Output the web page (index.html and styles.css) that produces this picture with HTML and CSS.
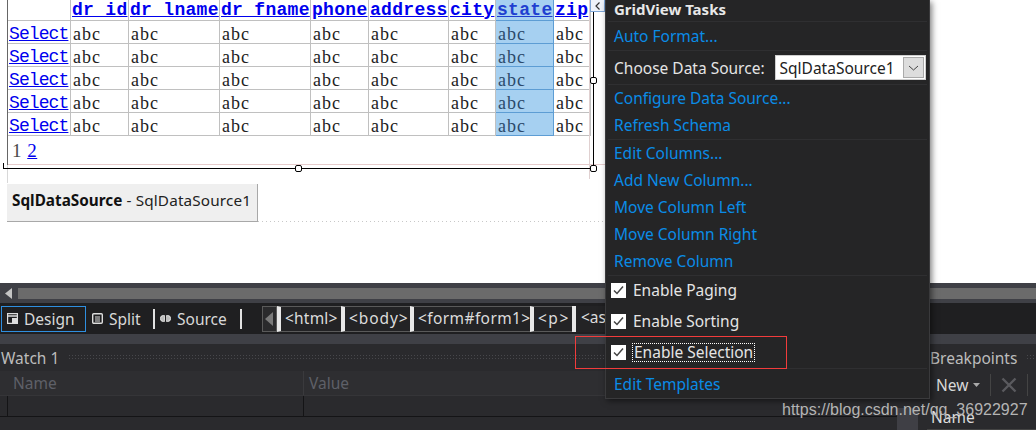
FILE: index.html
```html
<!DOCTYPE html>
<html lang="en">
<head>
<meta charset="utf-8">
<title>GridView Tasks</title>
<link rel="stylesheet" href="styles.css">
</head>
<body>
<div class="screen">
  <section class="design">
    <table class="grid">
      <colgroup>
        <col class="c0"><col class="c1"><col class="c2"><col class="c2"><col class="c3"><col class="c4"><col class="c5"><col class="c3"><col class="c6">
      </colgroup>
      <thead>
        <tr><th></th><th><a>dr_id</a></th><th><a>dr_lname</a></th><th><a>dr_fname</a></th><th><a>phone</a></th><th><a>address</a></th><th><a>city</a></th><th class="sel"><a>state</a></th><th><a>zip</a></th></tr>
      </thead>
      <tbody>
        <tr><td><a>Select</a></td><td>abc</td><td>abc</td><td>abc</td><td>abc</td><td>abc</td><td>abc</td><td class="sel">abc</td><td>abc</td></tr>
        <tr><td><a>Select</a></td><td>abc</td><td>abc</td><td>abc</td><td>abc</td><td>abc</td><td>abc</td><td class="sel">abc</td><td>abc</td></tr>
        <tr><td><a>Select</a></td><td>abc</td><td>abc</td><td>abc</td><td>abc</td><td>abc</td><td>abc</td><td class="sel">abc</td><td>abc</td></tr>
        <tr><td><a>Select</a></td><td>abc</td><td>abc</td><td>abc</td><td>abc</td><td>abc</td><td>abc</td><td class="sel">abc</td><td>abc</td></tr>
        <tr><td><a>Select</a></td><td>abc</td><td>abc</td><td>abc</td><td>abc</td><td>abc</td><td>abc</td><td class="sel">abc</td><td>abc</td></tr>
      </tbody>
    </table>
    <div class="pager">1 <a>2</a></div>
    <i class="guide guide-h"></i><i class="guide guide-e"></i><i class="guide guide-l"></i><i class="guide guide-r"></i>
    <div class="selection">
      <i class="stub"></i><i class="handle h-bottom"></i><i class="handle h-right"></i><i class="handle h-corner"></i>
    </div>
    <div class="smart-tag"><svg width="10" height="10" viewBox="0 0 10 10"><path d="M6.500 1.500 3 5l3.500 3.500" fill="none" stroke="#333" stroke-width="1.200"/></svg></div>
    <div class="datasource"><b>SqlDataSource</b> - SqlDataSource1</div>
    <div class="dots"></div>
  </section>

  <div class="hscroll">
    <svg class="arrow" width="7" height="11" viewBox="0 0 7 11"><path d="M7 0v11L0 5.500z" fill="#c4c4c4"/></svg>
    <div class="thumb"></div>
  </div>

  <nav class="viewbar">
    <div class="viewtab active"><svg width="11" height="11" viewBox="0 0 11 11"><path d="M.6.6h9.800v9.800H.6z" fill="none" stroke="#ddd" stroke-width="1.200"/><path d="M1 3h9" stroke="#ddd" stroke-width="1.500"/><path d="M5 5h6v6H5z" fill="#ddd"/></svg>Design</div>
    <div class="viewtab split"><svg width="11" height="11" viewBox="0 0 11 11"><rect x=".7" y=".7" width="9.600" height="9.600" rx="1" fill="none" stroke="#ddd" stroke-width="1.400"/><path d="M3 4h5M3 6h5M3 8h5" stroke="#ddd"/></svg>Split</div>
    <i class="sep"></i>
    <div class="viewtab source-tab"><svg width="11" height="11" viewBox="0 0 11 11"><circle cx="3.400" cy="5.500" r="3" fill="#bbb" stroke="#e4e4e4"/><circle cx="7.600" cy="5.500" r="3" fill="#bbb" stroke="#e4e4e4"/><path d="M5.500 1v9" stroke="#1f1f21"/></svg>Source</div>
    <i class="sep"></i>
    <div class="crumbs">
      <span class="crumb back"><svg width="9" height="14" viewBox="0 0 9 14"><path d="M8 0v14L0 7z" fill="#7a7a7a"/></svg></span>
      <span class="crumb c-html">&lt;html&gt;</span>
      <span class="crumb c-body">&lt;body&gt;</span>
      <span class="crumb c-form">&lt;form#form1&gt;</span>
      <span class="crumb c-p">&lt;p&gt;</span>
      <span class="crumb last">&lt;asp:GridView#GridView1&gt;</span>
    </div>
  </nav>

  <div class="band"></div>

  <section class="tools">
    <div class="watch">
      <header class="pane-title"><span>Watch 1</span><i class="grip"></i></header>
      <div class="cols"><span class="col-name">Name</span><span class="col-value">Value</span></div>
      <div class="row"><span class="row-a"></span><span class="row-b"></span></div>
    </div>
    <div class="scroll-side"></div>
    <div class="breakpoints">
      <header class="pane-title"><span>Breakpoints</span><i class="grip"></i></header>
      <div class="bp-tools"><span class="new">New<svg width="7" height="4" viewBox="0 0 7 4"><path d="M0 0h7L3.500 4z" fill="#aaa"/></svg></span><i class="tool-sep"></i><svg width="16" height="16" viewBox="0 0 16 16"><path d="M1.500 1.500l13 13M14.500 1.500l-13 13" stroke="#5a5a5e" stroke-width="2.400"/></svg><i class="tool-sep"></i></div>
      <div class="bp-head">Name</div>
    </div>
  </section>

  <aside class="tasks">
    <h2>GridView Tasks</h2>
    <div class="group one"><a>Auto Format...</a></div>
    <div class="group source">
      <label>Choose Data Source:</label>
      <div class="combo"><span>SqlDataSource1</span><b><svg width="11" height="6" viewBox="0 0 11 6"><path d="M1 1l4.500 4L10 1" fill="none" stroke="#444"/></svg></b></div>
    </div>
    <div class="group two"><a>Configure Data Source...</a><a>Refresh Schema</a></div>
    <div class="group five">
      <a>Edit Columns...</a><a>Add New Column...</a><a>Move Column Left</a><a>Move Column Right</a><a>Remove Column</a>
    </div>
    <div class="group checks">
      <div class="check"><svg width="15" height="15" viewBox="0 0 15 15"><rect width="15" height="15" fill="#fff"/><path d="M3 7.500l3 3 6-7" fill="none" stroke="#444" stroke-width="1.500"/></svg><span>Enable Paging</span></div>
      <div class="check"><svg width="15" height="15" viewBox="0 0 15 15"><rect width="15" height="15" fill="#fff"/><path d="M3 7.500l3 3 6-7" fill="none" stroke="#444" stroke-width="1.500"/></svg><span>Enable Sorting</span></div>
      <div class="check"><svg width="15" height="15" viewBox="0 0 15 15"><rect width="15" height="15" fill="#fff"/><path d="M3 7.500l3 3 6-7" fill="none" stroke="#444" stroke-width="1.500"/></svg><span class="focus">Enable Selection</span></div>
    </div>
    <div class="group last"><a>Edit Templates</a></div>
  </aside>

  <div class="redbox"></div>
  <div class="watermark">https://blog.csdn.net/qq_36922927</div>
</div>
</body>
</html>
```
FILE: styles.css
```css
* { box-sizing: border-box; }
html, body { margin: 0; padding: 0; }
body { width: 1036px; height: 430px; overflow: hidden; background: #fff; }
.screen { position: relative; width: 1036px; height: 430px; overflow: hidden; font-family: "Noto Sans", "Open Sans", sans-serif; font-size: 15.500px; display: flex; flex-direction: column; }

/* design surface */
.design { position: relative; height: 283px; background: #fff; padding: 0 0 0 7px; flex: none; }
.grid { border-collapse: collapse; table-layout: fixed; width: 583px; font-family: "Liberation Serif", "DejaVu Serif", serif; font-size: 18px; letter-spacing: 1px; color: #222; }
.c0 { width: 63px; } .c1 { width: 58px; } .c2 { width: 91px; } .c3 { width: 58px; } .c4 { width: 80px; } .c5 { width: 47px; } .c6 { width: 37px; }
.grid th, .grid td { border: 1px solid #c0c0c0; padding: 0 2px; height: 23px; text-align: left; white-space: nowrap; overflow: hidden; line-height: 18px; vertical-align: bottom; }
.grid th { height: 20px; font-family: "Liberation Mono", "DejaVu Sans Mono", monospace; font-size: 18px; font-weight: 700; letter-spacing: .3px; border-top: 0; line-height: 19px; padding: 0 1px; }
.grid td:first-child { padding-left: 1px; }
.grid td:first-child a { font-family: "Liberation Mono", monospace; font-size: 18px; letter-spacing: -.9px; }
.grid a, .pager a { color: #0000ee; text-decoration: underline; }
.grid .sel { background: #a6d0f1; color: #2b4a6b; border-color: #5d9dd4; }
.grid .sel a { color: #1f3fd0; }
.pager { width: 583px; height: 30px; padding: 4px 0 0 5px; font-family: "Liberation Serif", serif; font-size: 19px; letter-spacing: .5px; color: #4a4a4a; }
.guide { position: absolute; background: #e6cccc; }
.guide-h { left: 7px; top: 164px; width: 598px; height: 1px; }
.guide-e { left: 7px; top: 0; width: 1px; height: 165px; background: #666; }
.guide-l { left: 7px; top: 165px; width: 1px; height: 18px; background: #d8d8d8; }
.guide-r { left: 589px; top: 0; width: 1px; height: 179px; background: #e0d0d0; }
.selection { position: absolute; left: 3px; top: -2px; width: 591px; height: 171px; border: 1px solid #000; border-width: 0 1px 1px 0; }
.stub { position: absolute; left: 0; bottom: 0; width: 1px; height: 5px; background: #000; }
.handle { position: absolute; width: 7px; height: 7px; background: #fff; border: 1px solid #000; border-radius: 2px; }
.h-bottom { left: 292px; bottom: -4px; }
.h-right { right: -4px; top: 79px; }
.h-corner { right: -4px; bottom: -4px; }
.smart-tag { position: absolute; left: 590px; top: 0; width: 15px; height: 12px; background: #eef3fa; border: 1px solid #7ea6d6; border-top: 0; display: flex; align-items: center; justify-content: center; }
.datasource { position: absolute; left: 7px; top: 184px; width: 251px; height: 38px; background: #efefef; border-right: 1px solid #a8a8a8; border-bottom: 1px solid #a8a8a8; padding: 6px 0 0 5px; font-size: 15.300px; letter-spacing: .15px; line-height: 20px; color: #222; white-space: nowrap; }
.datasource b { font-weight: 700; color: #111; letter-spacing: 0; }
.dots { position: absolute; left: 258px; top: 221px; width: 347px; height: 1px; background-image: repeating-linear-gradient(90deg, #c8c8c8 0 1px, transparent 1px 4px); }

/* scroller */
.hscroll { flex: none; height: 20px; background: #3f4046; display: flex; align-items: flex-start; padding: 5px 0 0 5px; gap: 6px; }
.thumb { flex: 1; height: 11px; background: #6b6b6b; }

/* view bar */
.viewbar { flex: none; height: 31px; background: #1f1f21; display: flex; align-items: center; color: #dcdcdc; padding-left: 1px; position: relative; }
.viewtab { display: flex; align-items: center; gap: 6px; height: 26px; color: #d8d8d8; white-space: nowrap; }
.viewtab.active { border: 1px solid #2f8fe0; width: 85px; padding-left: 5px; }
.split { margin-left: 6px; width: 61px; }
.source-tab { margin-left: 5px; width: 80px; }
.sep { width: 2px; height: 20px; background: #e2e2e2; flex: none; }
.crumbs { display: flex; align-items: center; margin-left: 20px; height: 26px; }
.crumb { height: 26px; border: 1px solid #5a5a5a; border-right: 0; border-left: 4px solid #e8e8e8; padding: 0 0 0 4px; line-height: 22px; color: #dcdcdc; background: #232325; white-space: nowrap; flex: none; }
.crumb.back { border: 1px solid #5a5a5a; width: 15px; padding: 0 0 0 2px; display: flex; align-items: center; background: #2a2a2c; }
.c-html { width: 64px; letter-spacing: .2px; }
.c-body { width: 69px; letter-spacing: .9px; }
.c-form { width: 120px; letter-spacing: .4px; }
.c-p { width: 42px; letter-spacing: 1.500px; }
.crumb.last { border-top: 0; border-bottom: 0; border-right: 0; padding-left: 5px; width: 200px; }
.band { flex: none; height: 10px; background: #3f4046; }

/* tool panes */
.tools { flex: 1; display: flex; background: #2a2a2d; color: #cfcfcf; min-height: 0; }
.watch { width: 897px; flex: none; }
.pane-title { display: flex; align-items: center; height: 27px; padding: 0 0 0 1px; color: #bcbcbc; gap: 9px; }
.grip { flex: 1; height: 7px; background-image: radial-gradient(#47474b 1px, transparent 1px); background-size: 3px 3px; }
.cols { display: flex; height: 25px; background: #2e2e31; border-bottom: 1px solid #353538; color: #5e6068; line-height: 24px; }
.col-name { width: 304px; padding-left: 13px; border-right: 1px solid #3a3a3d; }
.col-value { padding-left: 5px; }
.row { display: flex; height: 21px; border-bottom: 1px solid #141416; }
.row-a { width: 297px; margin-left: 7px; border-left: 1px solid #141416; border-right: 1px solid #141416; }
.row-b { flex: 1; }
.scroll-side { width: 21px; flex: none; margin-top: 64px; background: #3f3f45; }
.breakpoints { flex: 1; min-width: 0; margin-left: 9px; position: relative; }
.breakpoints .pane-title { padding-left: 3px; width: 140px; }
.bp-tools { display: flex; align-items: center; gap: 10px; height: 28px; padding-left: 9px; color: #d8d8d8; }
.new { display: inline-flex; align-items: center; gap: 5px; }
.tool-sep { width: 1px; height: 22px; background: #444; }
.bp-head { position: absolute; left: 0; top: 60px; width: 109px; height: 26px; line-height: 26px; padding-left: 4px; color: #ddd; border-bottom: 1px solid #444; }

/* tasks panel */
.tasks { position: absolute; left: 605px; top: 0; width: 325px; height: 399px; background: #252526; border: 1px solid #3a3a3c; border-top: 0; box-shadow: 2px 2px 6px rgba(0,0,0,.5); color: #e6e6e6; padding: 0 2px; }
.tasks h2 { margin: 0; height: 22px; font-size: 15px; line-height: 18px; font-weight: 700; padding-left: 6px; color: #e8e8e8; border-bottom: 1px solid #2f2f31; }
.group { border-bottom: 1px solid #2f2f31; display: flex; flex-direction: column; padding-left: 6px; }
.group a { color: #0a8ce6; display: block; height: 27px; line-height: 27px; white-space: nowrap; }
.one { height: 29px; }
.one a { line-height: 29px; height: 28px; }
.source { flex-direction: row; align-items: center; height: 34px; gap: 10px; color: #e4e4e4; white-space: nowrap; }
.combo { width: 151px; height: 25px; flex: none; background: #fff; border: 1px solid #cfcfcf; display: flex; align-items: center; color: #222; padding-left: 4px; justify-content: space-between; }
.combo b { width: 21px; height: 21px; background: #ddd; border: 1px solid #aaa; margin-right: 1px; display: flex; align-items: center; justify-content: center; }
.two { height: 55px; }
.five { height: 136px; }
.checks { padding: 0; height: 93px; }
.check { height: 31px; display: flex; align-items: center; gap: 7px; padding: 0 0 2px 3px; color: #e4e4e4; }
.check:last-child { padding-bottom: 0; }
.focus { outline: 1px dotted #fff; padding: 0 1px; line-height: 17px; }
.last { border-bottom: 0; }
.last a { height: 30px; line-height: 30px; }

/* overlays */
.redbox { position: absolute; left: 575px; top: 336px; width: 212px; height: 33px; border: 1px solid #f23c3c; }
.watermark { position: absolute; left: 782px; top: 401px; font-family: "Liberation Sans", Arial, sans-serif; font-size: 16px; color: #b4b4b4; white-space: nowrap; }
```
